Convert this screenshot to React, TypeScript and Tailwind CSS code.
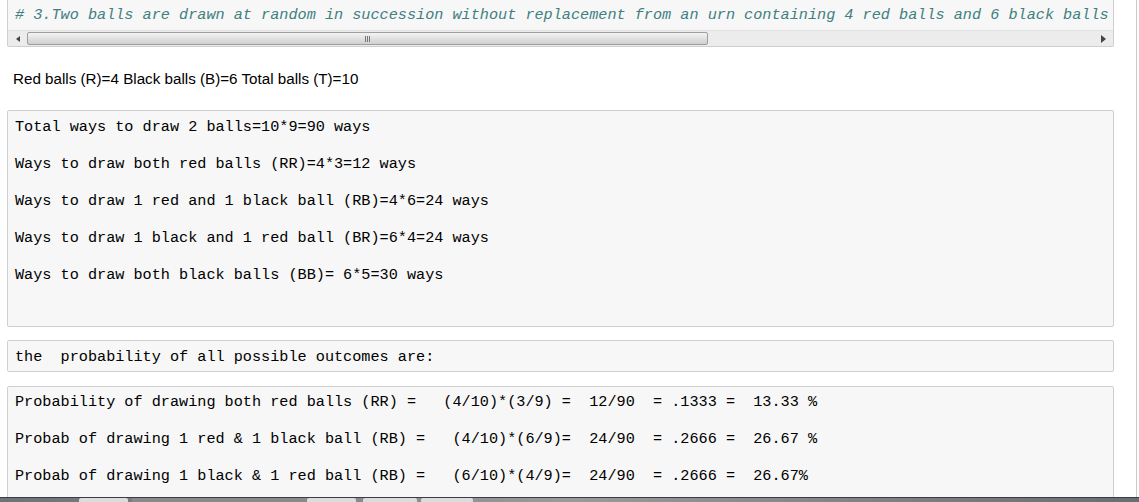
import React from "react"

const mono = { fontFamily: '"Liberation Mono", "Courier New", monospace' }

const waysLines = [
  "Total ways to draw 2 balls=10*9=90 ways",
  "Ways to draw both red balls (RR)=4*3=12 ways",
  "Ways to draw 1 red and 1 black ball (RB)=4*6=24 ways",
  "Ways to draw 1 black and 1 red ball (BR)=6*4=24 ways",
  "Ways to draw both black balls (BB)= 6*5=30 ways",
]

const probLines = [
  "Probability of drawing both red balls (RR) =   (4/10)*(3/9) =  12/90  = .1333 =  13.33 %",
  "Probab of drawing 1 red & 1 black ball (RB) =   (4/10)*(6/9)=  24/90  = .2666 =  26.67 %",
  "Probab of drawing 1 black & 1 red ball (RB) =   (6/10)*(4/9)=  24/90  = .2666 =  26.67%",
]

const Line = ({ text }: { text: string }) => (
  <div className="h-[20px] leading-[20px] whitespace-pre text-[15.2px] text-black" style={mono}>
    {text}
  </div>
)

export default function App() {
  return (
    <div className="w-[1139px] h-[502px] overflow-hidden bg-white flex flex-col">
      <div className="flex flex-1 min-h-0">
        {/* notebook area */}
        <div className="w-[1136px] overflow-hidden">
          {/* comment cell with scrollbar */}
          <div className="ml-[7px] w-[1107px] h-[47px] bg-[#f7f7f7] border-x border-b border-[#cfcfcf] rounded-b-[2px] flex flex-col">
            <div className="h-[30px] pt-[5px] pl-[7px] overflow-hidden">
              <div
                className="h-[20px] leading-[20px] whitespace-pre italic text-[15.2px] text-[#408080]"
                style={mono}
              >
                # 3.Two balls are drawn at random in succession without replacement from an urn containing 4 red balls and 6 black balls
              </div>
            </div>
            <div className="h-[16px] flex items-stretch bg-[#ececec] border-t border-[#e2e2e2]">
              <div className="w-[19px] flex items-center justify-center">
                <div className="w-0 h-0 border-y-[3px] border-y-transparent border-r-[4px] border-r-[#444]" />
              </div>
              <div className="w-[681px] my-[1px] border border-[#9e9e9e] rounded-[2px] bg-gradient-to-b from-[#f4f4f4] to-[#cfcfcf] flex items-center justify-center">
                <div className="flex gap-[1px]">
                  <div className="w-[1px] h-[6px] bg-[#777]" />
                  <div className="w-[1px] h-[6px] bg-[#777]" />
                  <div className="w-[1px] h-[6px] bg-[#777]" />
                </div>
              </div>
              <div className="flex-1" />
              <div className="w-[19px] flex items-center justify-center">
                <div className="w-0 h-0 border-y-[4px] border-y-transparent border-l-[5px] border-l-[#444]" />
              </div>
            </div>
          </div>

          {/* markdown text */}
          <div
            className="mt-[22px] ml-[13px] h-[20px] leading-[20px] text-[15.2px] text-black"
            style={{ fontFamily: '"Liberation Sans", Arial, sans-serif' }}
          >
            Red balls (R)=4 Black balls (B)=6 Total balls (T)=10
          </div>

          {/* ways cell */}
          <div className="mt-[21px] ml-[7px] w-[1107px] h-[217px] bg-[#f7f7f7] border border-[#cfcfcf] rounded-[2px] pt-[6px] pl-[7px] flex flex-col gap-[17px]">
            {waysLines.map((l) => (
              <Line key={l} text={l} />
            ))}
          </div>

          {/* heading cell */}
          <div className="mt-[13px] ml-[7px] w-[1107px] h-[32px] bg-[#f7f7f7] border border-[#cfcfcf] rounded-[2px] pt-[6px] pl-[7px]">
            <Line text="the  probability of all possible outcomes are:" />
          </div>

          {/* probabilities cell */}
          <div className="mt-[14px] ml-[7px] w-[1107px] h-[140px] bg-[#f7f7f7] border border-[#cfcfcf] rounded-[2px] pt-[5px] pl-[7px] flex flex-col gap-[17px]">
            {probLines.map((l) => (
              <Line key={l} text={l} />
            ))}
          </div>
        </div>
        <div className="w-[1px] bg-[#c8c8c8]" />
        <div className="w-[2px] bg-white" />
      </div>

      {/* taskbar edge */}
      <div className="h-[5px] border-t border-[#3a3d44] flex bg-gradient-to-r from-[#6f7278] via-[#9a9a9a] to-[#6a6d72]">
        <div className="w-[79px]" />
        <div className="w-[49px] bg-[#dcdcdc] rounded-t-[2px]" />
        <div className="w-[4px]" />
        <div className="w-[175px] bg-[#8a8a8a]" />
        <div className="w-[49px] bg-[#dcdcdc] rounded-t-[2px]" />
        <div className="w-[7px]" />
        <div className="w-[54px] bg-[#dcdcdc] rounded-t-[2px]" />
        <div className="w-[4px]" />
        <div className="w-[52px] bg-[#dcdcdc] rounded-t-[2px]" />
        <div className="flex-1" />
      </div>
    </div>
  )
}
